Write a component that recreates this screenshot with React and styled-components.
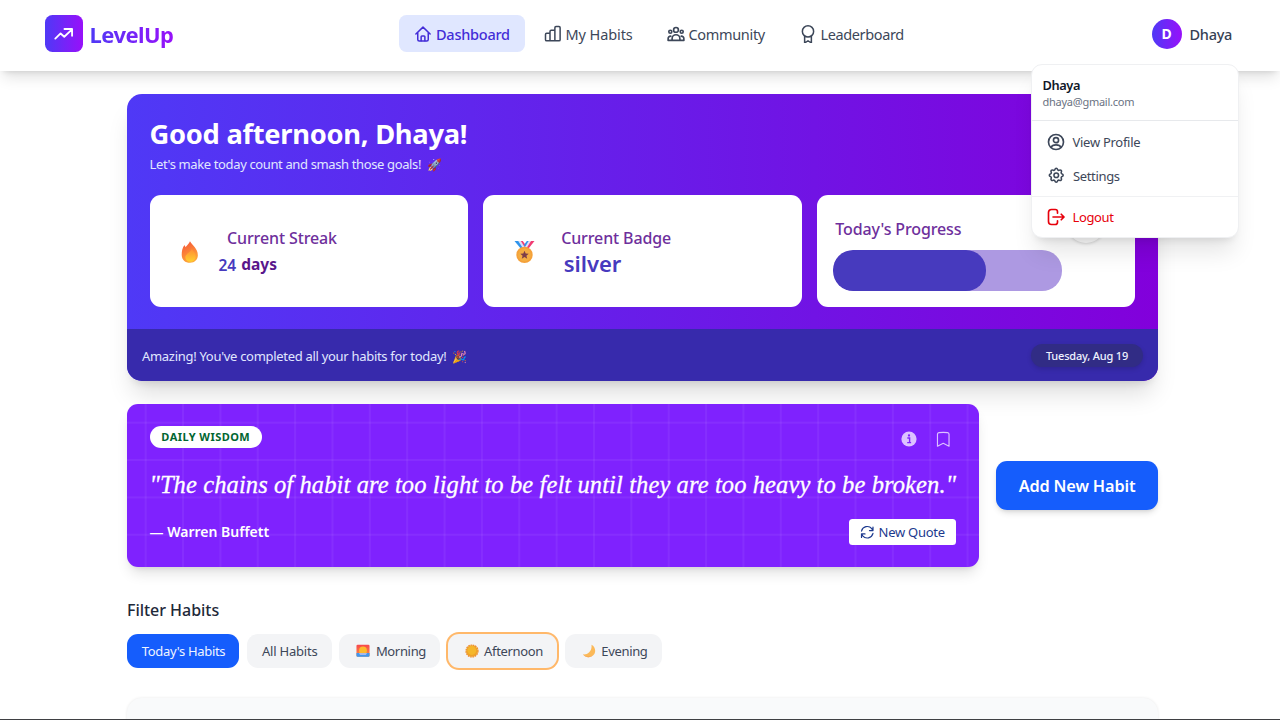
import React from "react";
import styled, { createGlobalStyle, css } from "styled-components";
import { HiOutlineBookmark } from "react-icons/hi2";
import { TbSettings } from "react-icons/tb";

const Global = createGlobalStyle`
  *, *::before, *::after { box-sizing: border-box; }
  body {
    margin: 0;
    background: #fff;
    font-family: "Noto Sans", "Open Sans", "Liberation Sans", sans-serif;
    color: #1e2939;
    overflow: hidden;
  }
  h1, h2, h3, p { margin: 0; }
  button { font-family: inherit; border: 0; }
`;

const Page = styled.div`
  height: 720px;
  overflow: hidden;
  border-bottom: 1px solid #3f4043;
`;

/* A run of text with its own size, weight and tracking */
const Text = styled.span`
  display: block;
  white-space: nowrap;
  font-size: ${(p) => p.$size}px;
  font-weight: ${(p) => p.$weight || 400};
  letter-spacing: ${(p) => p.$track || 0}px;
  line-height: ${(p) => p.$line || 20}px;
  color: ${(p) => p.$color || "inherit"};
`;

const Emoji = styled.span`
  margin-left: ${(p) => p.$gap}px;
  font-size: 12px;
  line-height: 1;
  opacity: 0.9;
`;

/* ---------- header ---------- */

const Header = styled.header`
  position: relative;
  z-index: 5;
  display: grid;
  grid-template-columns: 354px auto 1fr;
  align-items: center;
  height: 71px;
  padding: 0 48px 4px 45px;
  background: #fff;
  box-shadow: 0 9px 14px -3px rgba(0, 0, 0, 0.12), 0 4px 6px -4px rgba(0, 0, 0, 0.14);
`;

const Brand = styled.a`
  display: flex;
  align-items: center;
  gap: 7px;
`;

const BrandTile = styled.span`
  display: grid;
  place-items: center;
  width: 37.5px;
  height: 37.5px;
  border-radius: 7.5px;
  background: linear-gradient(to right, #4f39f6, #9810fa);
`;

const BrandName = styled(Text)`
  background: linear-gradient(to right, #4f39f6, #9810fa);
  background-clip: text;
  color: transparent;
  padding-right: 1px;
`;

const Nav = styled.nav`
  display: flex;
  gap: 4px;
`;

const NavItem = styled.a`
  display: flex;
  align-items: center;
  gap: 4px;
  height: 37.5px;
  width: ${(p) => p.$width}px;
  padding: 0 15px;
  border-radius: 7.5px;
  color: ${(p) => (p.$active ? "#432dd7" : "#3d4759")};
  background: ${(p) => (p.$active ? "#e0e7ff" : "transparent")};
  svg { flex: none; }
`;

const User = styled.div`
  justify-self: end;
  display: flex;
  align-items: center;
  gap: 8px;
`;

const Avatar = styled.span`
  display: grid;
  place-items: center;
  width: 30px;
  height: 30px;
  border-radius: 50%;
  background: linear-gradient(to right, #4f39f6, #9810fa);
`;

const Menu = styled.div`
  position: absolute;
  top: 64px;
  right: 41px;
  width: 208.5px;
  height: 174px;
  border: 1px solid #eff0f2;
  border-radius: 11px;
  background: #fff;
  box-shadow: 0 19px 23px -5px rgba(0, 0, 0, 0.1), 0 7px 9px -6px rgba(0, 0, 0, 0.12);
`;

const MenuHead = styled.div`
  height: 56px;
  padding: 11px 11px 0;
  border-bottom: 1px solid #e7e9ec;
`;

const MenuGroup = styled.div`
  padding: ${(p) => p.$top}px 15px 0;
  height: ${(p) => p.$height}px;
  & + & { border-top: 1px solid #f0f1f3; }
`;

const MenuItem = styled.a`
  display: flex;
  align-items: center;
  gap: 8px;
  height: 34px;
  color: ${(p) => (p.$danger ? "#e7000b" : "#3d4759")};
  svg { flex: none; margin-top: -1px; }
`;

/* ---------- hero ---------- */

const Main = styled.main`
  width: 1031px;
  margin-left: 127px;
  padding-top: 23px;
`;

const Hero = styled.section`
  display: flex;
  flex-direction: column;
  height: 287px;
  border-radius: 15px;
  overflow: hidden;
  background: linear-gradient(to right, #4f39f6, #8200db);
`;

const HeroShadow = styled.div`
  border-radius: 15px;
  box-shadow: 0 18px 24px -5px rgba(0, 0, 0, 0.13), 0 7px 10px -6px rgba(0, 0, 0, 0.14);
`;

const HeroBody = styled.div`
  height: 235px;
  padding: 21px 22.5px 0;
  color: #fff;
`;

const Greeting = styled(Text)`
  height: 22px;
`;

const Stats = styled.div`
  display: grid;
  grid-template-columns: repeat(3, 1fr);
  gap: 15px;
  margin-top: 20px;
`;

const Card = styled.article`
  display: flex;
  height: 112px;
  border-radius: 11px;
  background: #fff;
`;

const StatIcon = styled.span`
  display: flex;
  align-items: center;
  width: 22px;
  margin: 2px ${(p) => p.$gap}px 0 30.5px;
`;

const StatInfo = styled.div`
  padding-top: 32px;
`;

const StatLabel = styled(Text)`
  padding-left: ${(p) => p.$indent || 0}px;
`;

const StatValue = styled.div`
  display: flex;
  gap: 5px;
  padding: 3px 0 0 ${(p) => p.$indent || 0}px;
`;

const ProgressCard = styled(Card)`
  flex-direction: column;
  padding: 10px 30px 0 16px;
`;

const ProgressHead = styled.div`
  display: flex;
  justify-content: space-between;
  align-items: flex-end;
  height: 38px;
  padding: 0 0 0 2.5px;
`;

const Knob = styled.span`
  width: 38px;
  height: 38px;
  border-radius: 50%;
  background: #fff;
  box-shadow: 0 1px 3px rgba(0, 0, 0, 0.15);
`;

const Track = styled.div`
  width: 229px;
  height: 41px;
  margin-top: 7px;
  border-radius: 20px;
  overflow: hidden;
  background: #ad99e2;
`;

const Fill = styled.div`
  width: 67%;
  height: 100%;
  border-radius: 20px;
  background: #473abe;
`;

const HeroFoot = styled.footer`
  display: flex;
  align-items: center;
  justify-content: space-between;
  flex: 1;
  padding: 1px 15px 0;
  background: #372aac;
`;

const DatePill = styled.span`
  display: grid;
  place-items: center;
  width: 112px;
  height: 22.5px;
  border-radius: 12px;
  background: #312c85;
  box-shadow: 0 2px 5px rgba(0, 0, 0, 0.14);
`;

/* ---------- quote ---------- */

const QuoteRow = styled.section`
  display: flex;
  align-items: center;
  justify-content: space-between;
  margin-top: 23px;
`;

const line = "rgba(255, 255, 255, 0.055)";
const QuoteCard = styled.article`
  width: 851.5px;
  height: 163px;
  padding: 22px 22.5px;
  border-radius: 11px;
  color: #fff;
  background-color: #7f22fe;
  background-image: linear-gradient(to right, transparent 18px, ${line} 18px, ${line} 19.4px, transparent 19.4px),
    linear-gradient(to bottom, transparent 17.8px, ${line} 17.8px, ${line} 19.2px, transparent 19.2px);
  background-size: 37.37px 37.37px;
  box-shadow: 0 9px 14px -3px rgba(0, 0, 0, 0.12), 0 4px 6px -4px rgba(0, 0, 0, 0.12);
`;

const SplitRow = styled.div`
  display: flex;
  align-items: center;
  justify-content: space-between;
  height: ${(p) => p.$height}px;
`;

const Tag = styled.span`
  display: grid;
  place-items: center;
  width: 112.5px;
  height: 22px;
  border-radius: 11px;
  background: #fff;
`;

const QuoteActions = styled.div`
  display: flex;
  align-items: center;
  gap: 16.5px;
  padding: 4px 4px 0 0;
`;

const Quote = styled.p`
  margin: 20px 0 18px;
  font: italic 24.5px/33px "Liberation Serif", serif;
  letter-spacing: 0.105px;
  -webkit-text-stroke: 0.3px #fff;
  white-space: nowrap;
`;

const RefreshButton = styled.button`
  display: flex;
  align-items: center;
  gap: 4px;
  width: 107px;
  height: 26px;
  padding: 0 11px;
  border-radius: 3.5px;
  background: #fff;
  color: #1c398e;
`;

const AddButton = styled.button`
  display: grid;
  place-items: center;
  width: 162px;
  height: 48.5px;
  border-radius: 11px;
  background: #155dfc;
  color: #fff;
  box-shadow: 0 4px 6px -1px rgba(0, 0, 0, 0.12), 0 2px 4px -2px rgba(0, 0, 0, 0.12);
`;

/* ---------- filters ---------- */

const Filters = styled.section`
  padding-top: 33px;
`;

const FilterList = styled.div`
  display: flex;
  gap: 7.7px;
  margin-top: 14px;
`;

const FilterButton = styled.button`
  display: flex;
  align-items: center;
  justify-content: ${(p) => (p.$icon ? "flex-start" : "center")};
  gap: 5.5px;
  width: ${(p) => p.$width}px;
  height: 34px;
  padding: ${(p) => (p.$icon ? "0 0 0 17px" : "0 0 0 1px")};
  border-radius: 11px;
  background: ${(p) => (p.$active ? "#155dfc" : "#f3f4f6")};
  color: ${(p) => (p.$active ? "#eef4ff" : "#3d4759")};
  ${(p) => p.$ring && css`box-shadow: 0 0 0 2px #ffb86a;`}
`;

const Panel = styled.section`
  height: 100px;
  margin-top: 30px;
  border-radius: 15px;
  background: #f9fafb;
  box-shadow: 0 0 3px rgba(0, 0, 0, 0.09);
`;

/* ---------- icons ---------- */

const Glyph = ({ size = 18, stroke = 2, children }) => (
  <svg width={size} height={size} viewBox="0 0 24 24" fill="none" stroke="currentColor"
    strokeWidth={stroke} strokeLinecap="round" strokeLinejoin="round">{children}</svg>
);

const TrendIcon = () => (
  <Glyph size={22} stroke={2}>
    <path d="M2.500 17l5.800-5.600 4 3.600L20.500 7.200M12.500 6.500h8.300v7.500" stroke="#fff" />
  </Glyph>
);
const HomeIcon = () => (
  <Glyph>
    <path d="M2.500 12 12 2.800 21.500 12M5 10v9.200a2 2 0 0 0 2 2h10a2 2 0 0 0 2-2V10" />
    <path d="M9.500 21v-5.500a1 1 0 0 1 1-1h3a1 1 0 0 1 1 1V21" />
  </Glyph>
);
const BarsIcon = () => (
  <Glyph>
    <path d="M8 21H3.500A1.500 1.500 0 0 1 2 19.500v-7A1.500 1.500 0 0 1 3.500 11H8M8 21V8.500A1.500 1.500 0 0 1 9.500 7H14.500M8 21h6.500M14.500 21V3.500A1.500 1.500 0 0 1 16 2h4a1.500 1.500 0 0 1 1.500 1.500v16A1.500 1.500 0 0 1 20 21z" />
  </Glyph>
);
const PeopleIcon = () => (
  <Glyph stroke={2.2}>
    <circle cx="12" cy="6.500" r="3.200" />
    <circle cx="4.400" cy="9" r="2" />
    <circle cx="19.600" cy="9" r="2" />
    <path d="M6.800 20.500v-2.300a5.200 5.200 0 0 1 10.400 0v2.300zM6.500 20.500H1.500v-2.300c0-2 1.300-3.300 3.500-3.300M17.500 20.500h5v-2.300c0-2-1.300-3.300-3.500-3.300" />
  </Glyph>
);
const RibbonIcon = () => (
  <Glyph>
    <circle cx="12" cy="8.500" r="7.500" />
    <path d="M7.500 15v9l4.500-3 4.500 3v-9" />
  </Glyph>
);
const ProfileIcon = () => (
  <Glyph size={18} stroke={2.2}>
    <circle cx="12" cy="12" r="10" />
    <circle cx="12" cy="9.500" r="3.400" />
    <path d="M5.500 19c.8-2.200 3.300-3.200 6.500-3.200s5.700 1 6.500 3.200" />
  </Glyph>
);
const LogoutIcon = () => (
  <Glyph size={18} stroke={2.2}>
    <path d="M14 7V5a3 3 0 0 0-3-3H6a4 4 0 0 0-4 4v12a4 4 0 0 0 4 4h5a3 3 0 0 0 3-3v-2M8 12h14.500M19 8.300l3.700 3.700L19 15.700" />
  </Glyph>
);
const RefreshIcon = () => (
  <Glyph size={14.5} stroke={2}>
    <path d="M21.500 3.500v5.800h-5.800M2.500 20.500v-5.800h5.800M2.500 10a9.800 9.800 0 0 1 17-4l2 3.200M21.500 14a9.800 9.800 0 0 1-17 4l-2-3.200" />
  </Glyph>
);
const InfoIcon = () => (
  <svg width="16" height="16" viewBox="0 0 16 16">
    <circle cx="8" cy="8" r="7.600" fill="#dcc2ff" />
    <circle cx="8" cy="4.500" r="1.150" fill="#7f22fe" />
    <path d="M6.300 7h2.300v4.200M6.200 11.600h3.900" stroke="#7f22fe" strokeWidth="1.400" fill="none" />
  </svg>
);
const FlameIcon = () => (
  <svg width="19" height="24" viewBox="0 0 20 24">
    <defs>
      <linearGradient id="flame" x1="0" y1="0" x2="0.400" y2="1">
        <stop offset="0" stopColor="#f4503c" /><stop offset="0.550" stopColor="#fb8038" /><stop offset="1" stopColor="#fda63a" />
      </linearGradient>
      <linearGradient id="core" x1="0" y1="0" x2="0" y2="1">
        <stop offset="0" stopColor="#ff8b35" /><stop offset="1" stopColor="#ffd02e" />
      </linearGradient>
    </defs>
    <path d="M10.500.8C13 5 18.800 8.500 18.800 15.500c0 4.500-3.300 7.900-8.300 7.900S1.800 20.200 1.800 14.800c0-3.500.8-7.500 2.700-9.800.8.400 1 1.100 1.200 1.900C7.200 5.300 9.500 3.700 10.500.8z" fill="url(#flame)" />
    <path d="M12.500 8.500c2 3 4 4.800 4 8.200 0 3.300-2.400 5.600-5.700 5.600-3 0-5.200-1.800-5.200-4.700 0-3.500 4.800-4.800 6.900-9.100z" fill="url(#core)" />
  </svg>
);
const MedalIcon = () => (
  <svg width="21" height="24" viewBox="0 0 21 24">
    <path d="M.5 1h4.300l6.500 8-3 1.500z" fill="#2f95ec" />
    <path d="M4.200 1h2.600l5 7-2 1.500z" fill="#d9dff8" />
    <path d="M6.800 1h2l3 4.200-1.200 1.800z" fill="#f13c72" />
    <path d="M20.500 1h-4L10 9l3 1.500z" fill="#f13c72" />
    <path d="M17 1h-2.300L10 8l2 1z" fill="#e3def5" />
    <path d="M14.700 1h-1.900L10 5l1 2z" fill="#2f95ec" />
    <circle cx="10.500" cy="14.900" r="8.200" fill="#f5a13a" />
    <circle cx="10.500" cy="14.900" r="6.400" fill="#f3ad42" />
    <path d="M10.500 10.700l1.200 2.800 3 .2-2.300 2 .8 3-2.700-1.600-2.700 1.600.8-3-2.300-2 3-.2z" fill="#7c3e49" />
  </svg>
);
const SunriseIcon = () => (
  <svg width="14" height="13.500" viewBox="0 0 15 14">
    <defs>
      <linearGradient id="dawn" x1="0" y1="0" x2="0" y2="1">
        <stop offset="0" stopColor="#f8474d" /><stop offset="1" stopColor="#fb9140" />
      </linearGradient>
    </defs>
    <rect x="0.500" y="0.500" width="14" height="13" rx="1.300" fill="url(#dawn)" />
    <circle cx="7.500" cy="6.700" r="4.200" fill="#fdb92c" />
    <path d="M.5 9.500h14v2.700a1.300 1.300 0 0 1-1.300 1.300H1.800A1.300 1.300 0 0 1 .5 12.200z" fill="#3f97ef" />
    <path d="M3 9.500h9l-1.500 2H4.500z" fill="#a9b8e8" />
  </svg>
);
const SunIcon = () => (
  <svg width="14" height="14" viewBox="0 0 14 14">
    <circle cx="7" cy="7" r="5.900" fill="none" stroke="#ee8a2c" strokeWidth="1.400" strokeDasharray="1.700 0.617" />
    <circle cx="7" cy="7" r="5.800" fill="#efa22b" />
    <circle cx="6.800" cy="6.500" r="4.400" fill="#f5b72b" />
  </svg>
);
const MoonIcon = () => (
  <svg width="14" height="14" viewBox="0 0 14 14">
    <path d="M9.500.8c3.900 2 4.800 6.800 2.200 10C8.800 14.200 3.300 14 1 10.300c4.300.7 9.300-3 8.500-9.500z" fill="#fbb959" />
    <path d="M1 10.300c2.500 3 7 3.600 10.700.5C8.800 14.200 3.300 14 1 10.300z" fill="#ef8b45" />
  </svg>
);

/* ---------- data ---------- */

const navItems = [
  { label: "Dashboard", icon: <HomeIcon />, width: 125.5, size: 14.5, weight: 550, track: -0.25, active: true },
  { label: "My Habits", icon: <BarsIcon />, width: 119, size: 14.5, track: -0.1 },
  { label: "Community", icon: <PeopleIcon />, width: 128, size: 14.5, track: -0.33 },
  { label: "Leaderboard", icon: <RibbonIcon />, width: 135, size: 14.5, track: -0.38 },
];

const filters = [
  { label: "Today's Habits", width: 112, track: -0.33, active: true },
  { label: "All Habits", width: 85, track: -0.2 },
  { label: "Morning", width: 100.5, track: -0.33, icon: <SunriseIcon /> },
  { label: "Afternoon", width: 109.5, track: -0.33, icon: <SunIcon />, ring: true },
  { label: "Evening", width: 97, track: -0.33, icon: <MoonIcon /> },
];

export default function App() {
  return (
    <Page>
      <Global />
      <Header>
        <Brand>
          <BrandTile><TrendIcon /></BrandTile>
          <BrandName $size={22} $weight={700} $track={-0.55} $line={30}>LevelUp</BrandName>
        </Brand>
        <Nav>
          {navItems.map((n) => (
            <NavItem key={n.label} $active={n.active} $width={n.width}>
              {n.icon}
              <Text $size={n.size} $weight={n.weight} $track={n.track}>{n.label}</Text>
            </NavItem>
          ))}
        </Nav>
        <User>
          <Avatar><Text $size={14} $weight={700} $color="#fff">D</Text></Avatar>
          <Text $size={14.5} $weight={500} $track={-0.3} $color="#364153">Dhaya</Text>
        </User>
        <Menu>
          <MenuHead>
            <Text $size={12.8} $weight={600} $track={-0.4} $line={19} $color="#101828">Dhaya</Text>
            <Text $size={11} $track={-0.25} $line={13} $color="#6a7282">dhaya@gmail.com</Text>
          </MenuHead>
          <MenuGroup $top={4} $height={74.5}>
            <MenuItem><ProfileIcon /><Text $size={13} $track={-0.28}>View Profile</Text></MenuItem>
            <MenuItem><TbSettings size={18.500} /><Text $size={13} $track={-0.35}>Settings</Text></MenuItem>
          </MenuGroup>
          <MenuGroup $top={3.5} $height={41}>
            <MenuItem $danger><LogoutIcon /><Text $size={13} $track={-0.38}>Logout</Text></MenuItem>
          </MenuGroup>
        </Menu>
      </Header>

      <Main>
        <HeroShadow>
          <Hero>
            <HeroBody>
              <Text as="h1" $size={27.3} $weight={700} $track={-0.27} $line={38}>Good afternoon, Dhaya!</Text>
              <Greeting as="p" $size={13} $track={-0.37} $line={22} $color="#e0e7ff">
                Let's make today count and smash those goals!<Emoji $gap={6}>🚀</Emoji>
              </Greeting>
              <Stats>
                <Card>
                  <StatIcon $gap={16.5}><FlameIcon /></StatIcon>
                  <StatInfo>
                    <StatLabel $size={16} $weight={500} $track={-0.12} $line={23} $color="#6e2f9c" $indent={8.5}>Current Streak</StatLabel>
                    <StatValue>
                      <Text $size={15.5} $weight={600} $line={24} $color="#473abe">24</Text>
                      <Text $size={15.5} $weight={700} $line={23} $color="#59168b">days</Text>
                    </StatValue>
                  </StatInfo>
                </Card>
                <Card>
                  <StatIcon $gap={25.5}><MedalIcon /></StatIcon>
                  <StatInfo>
                    <StatLabel $size={16} $weight={500} $track={-0.12} $line={23} $color="#6e2f9c">Current Badge</StatLabel>
                    <StatValue $indent={2.5}>
                      <Text $size={22} $weight={600} $line={20} $color="#473abe">silver</Text>
                    </StatValue>
                  </StatInfo>
                </Card>
                <ProgressCard>
                  <ProgressHead>
                    <Text $size={16} $weight={500} $track={-0.13} $line={27} $color="#6e2f9c">Today's Progress</Text>
                    <Knob />
                  </ProgressHead>
                  <Track><Fill /></Track>
                </ProgressCard>
              </Stats>
            </HeroBody>
            <HeroFoot>
              <Text $size={13} $track={-0.3} $color="#e0e7ff">Amazing! You've completed all your habits for today!<Emoji $gap={6}>🎉</Emoji></Text>
              <DatePill><Text $size={11} $weight={500} $track={-0.18} $color="#eef2ff">Tuesday, Aug 19</Text></DatePill>
            </HeroFoot>
          </Hero>
        </HeroShadow>

        <QuoteRow>
          <QuoteCard>
            <SplitRow $height={22}>
              <Tag><Text $size={11} $weight={700} $track={0.45} $color="#016630">DAILY WISDOM</Text></Tag>
              <QuoteActions><InfoIcon /><HiOutlineBookmark size={18.500} color="#dcc2ff" /></QuoteActions>
            </SplitRow>
            <Quote>"The chains of habit are too light to be felt until they are too heavy to be broken."</Quote>
            <SplitRow $height={26}>
              <Text $size={14} $weight={600}>— Warren Buffett</Text>
              <RefreshButton><RefreshIcon /><Text $size={13} $track={-0.25}>New Quote</Text></RefreshButton>
            </SplitRow>
          </QuoteCard>
          <AddButton><Text $size={16.3} $weight={600} $track={-0.15}>Add New Habit</Text></AddButton>
        </QuoteRow>

        <Filters>
          <Text as="h2" $size={16} $weight={500} $track={-0.03} $line={20}>Filter Habits</Text>
          <FilterList>
            {filters.map((f) => (
              <FilterButton key={f.label} $width={f.width} $active={f.active} $ring={f.ring} $icon={!!f.icon}>
                {f.icon}
                <Text $size={13} $track={f.track}>{f.label}</Text>
              </FilterButton>
            ))}
          </FilterList>
        </Filters>
        <Panel />
      </Main>
    </Page>
  );
}
